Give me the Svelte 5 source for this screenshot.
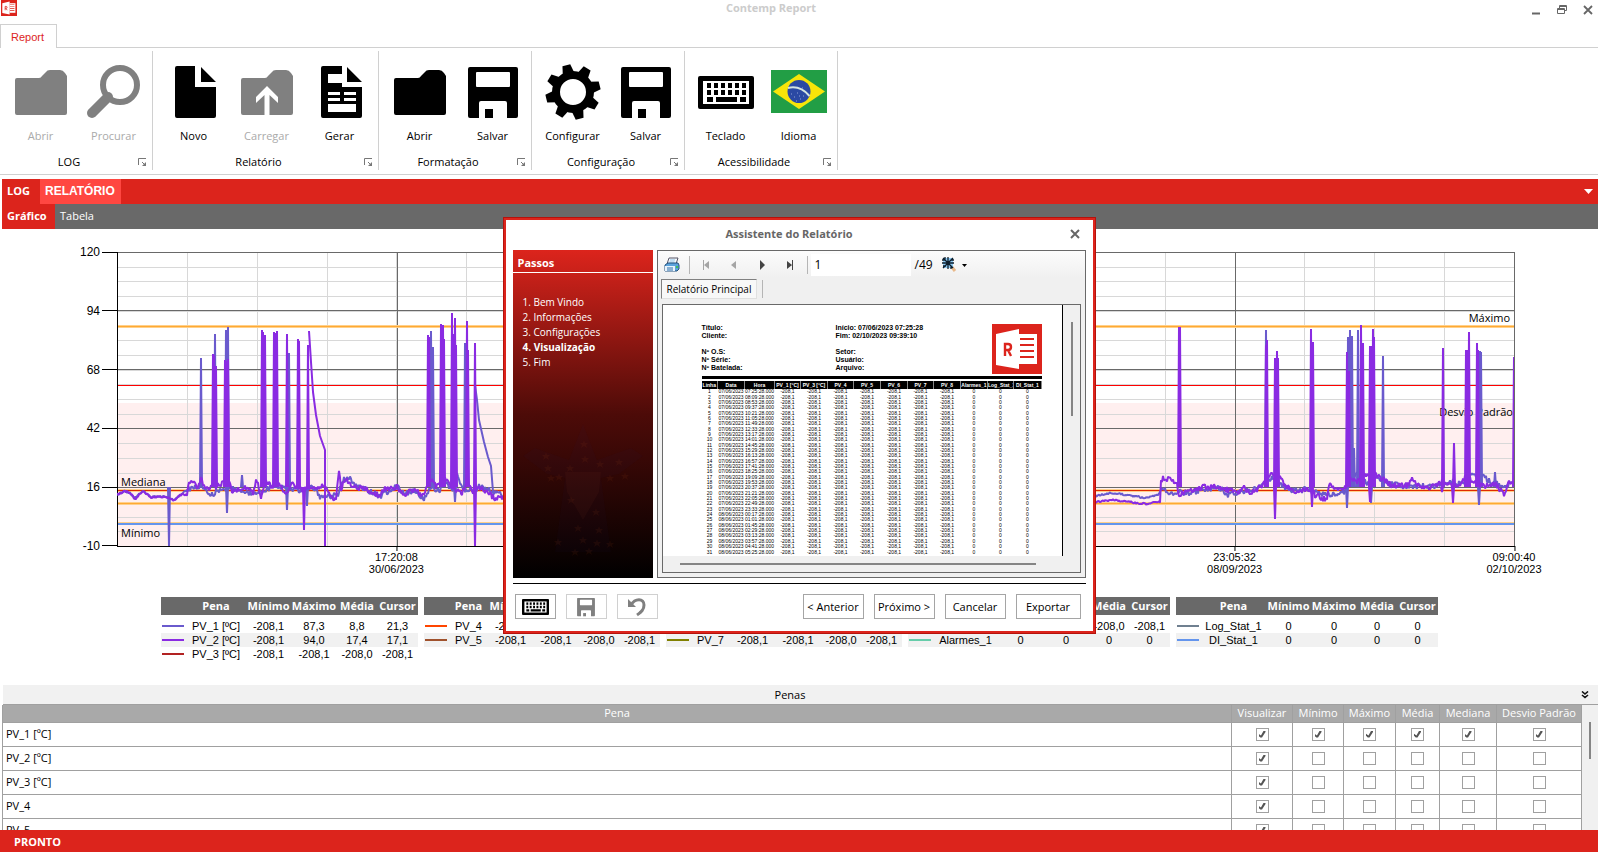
<script>
  const groups = [
    { name: 'LOG', items: [
      { label: 'Abrir', icon: 'folder', disabled: true },
      { label: 'Procurar', icon: 'search', disabled: true },
    ] },
    { name: 'Relatório', items: [
      { label: 'Novo', icon: 'file' },
      { label: 'Carregar', icon: 'upload', disabled: true },
      { label: 'Gerar', icon: 'report' },
    ] },
    { name: 'Formatação', items: [
      { label: 'Abrir', icon: 'folder' },
      { label: 'Salvar', icon: 'save' },
    ] },
    { name: 'Configuração', items: [
      { label: 'Configurar', icon: 'gear' },
      { label: 'Salvar', icon: 'save' },
    ] },
    { name: 'Acessibilidade', items: [
      { label: 'Teclado', icon: 'keyboard' },
      { label: 'Idioma', icon: 'flag' },
    ] },
  ];

  // plot area, in viewBox units
  const plot = { x: 117, y: 252, w: 1397, h: 294 };
  const yTicks = [120, 94, 68, 42, 16, -10];
  const xTicks = [
    { at: 20, time: '17:20:08', date: '30/06/2023' },
    { at: 80, time: '23:05:32', date: '08/09/2023' },
    { at: 100, time: '09:00:40', date: '02/10/2023' },
  ];
  const minorY = Array.from({ length: 20 }, (_, i) => Math.round(plot.y + (i * plot.h) / 20));
  const minorX = Array.from({ length: 20 }, (_, i) => Math.round(plot.x + (i * plot.w) / 20));

  const base1 = [
    [117, 495], [124, 491], [130, 493], [134, 498], [143, 491], [150, 497], [168, 497], [174, 501], [180, 495],
    [188, 490], [195, 486], [203, 486], [210, 495], [220, 490], [230, 488], [240, 492], [252, 493], [262, 492],
    [275, 485], [284, 488], [300, 491], [309, 487], [317, 490], [320, 498], [330, 496], [338, 495], [343, 480],
    [349, 478], [356, 486], [366, 489], [375, 493], [380, 497], [388, 491], [397, 487], [405, 494], [415, 490],
    [424, 500], [430, 487], [440, 490], [446, 481], [452, 492], [457, 475], [465, 490], [475, 490], [480, 486],
    [504, 496], [1096, 496], [1110, 493], [1130, 495], [1145, 498], [1158, 495], [1163, 487], [1168, 495],
    [1180, 492], [1190, 493], [1205, 489], [1220, 488], [1228, 495], [1240, 492], [1255, 489], [1264, 482],
    [1275, 477], [1283, 486], [1295, 491], [1310, 489], [1320, 494], [1335, 494], [1345, 491], [1350, 478],
    [1358, 475], [1367, 483], [1376, 476], [1390, 484], [1405, 486], [1420, 486], [1440, 485], [1452, 481],
    [1460, 484], [1470, 476], [1482, 474], [1490, 482], [1505, 486], [1513, 481],
  ];
  const base2 = [
    [117, 495], [124, 491], [130, 493], [135, 499], [143, 491], [150, 497], [168, 497], [174, 501], [180, 495],
    [187, 494], [189, 482], [198, 486], [201, 478], [205, 489], [216, 487], [228, 481], [232, 491], [244, 487],
    [253, 493], [257, 479], [261, 499], [265, 480], [272, 487], [278, 482], [284, 494], [292, 484], [303, 491],
    [309, 486], [325, 487], [332, 500], [336, 500], [339, 470], [341, 488], [346, 480], [354, 486], [366, 490],
    [378, 495], [385, 489], [397, 487], [404, 495], [413, 490], [424, 495], [430, 478], [436, 486], [447, 478],
    [452, 487], [462, 493], [468, 480], [473, 496], [477, 487], [488, 492], [495, 499], [504, 498], [1096, 502],
    [1115, 500], [1130, 502], [1145, 504], [1160, 502], [1161, 480], [1165, 478], [1172, 481], [1177, 483],
    [1179, 495], [1188, 491], [1200, 488], [1215, 486], [1228, 490], [1238, 494], [1243, 487], [1250, 492],
    [1262, 487], [1268, 476], [1278, 474], [1285, 486], [1296, 493], [1310, 489], [1316, 496], [1327, 500],
    [1329, 484], [1335, 488], [1346, 488], [1350, 475], [1356, 482], [1363, 477], [1371, 472], [1383, 479],
    [1392, 486], [1408, 485], [1412, 477], [1418, 486], [1430, 487], [1442, 482], [1448, 484], [1456, 487],
    [1466, 477], [1476, 483], [1484, 486], [1495, 484], [1504, 494], [1508, 484], [1514, 480],
  ];

  // [x, y of the far end]
  const spikes1 = [
    [169, 546], [201, 358], [215, 334], [226, 330], [227, 513], [228, 327], [242, 475], [287, 510], [289, 353],
    [307, 506], [431, 331], [433, 347], [453, 334], [455, 502], [465, 343], [466, 345], [1266, 330], [1347, 508],
    [1348, 337], [1350, 330], [1352, 336], [1354, 448], [1358, 330], [1371, 503], [1383, 356], [1479, 505],
    [1480, 351], [1481, 352], [1495, 472],
  ];
  const spikes2 = [
    [213, 354], [214, 355], [216, 366], [225, 360], [226, 361], [228, 359], [262, 330], [263, 332], [265, 335],
    [274, 332], [275, 333], [277, 331], [287, 334], [298, 339], [299, 341], [304, 530], [308, 345], [428, 335],
    [429, 337], [441, 324], [443, 325], [444, 339], [452, 313], [453, 334], [455, 318], [456, 345], [467, 321],
    [468, 350], [475, 343], [475, 546], [1179, 327], [1180, 327], [1266, 345], [1267, 340], [1275, 358],
    [1275, 519], [1277, 351], [1278, 358], [1311, 329], [1312, 507], [1313, 342], [1347, 352], [1349, 371],
    [1361, 325], [1362, 345], [1363, 343], [1370, 346], [1370, 502], [1371, 346], [1373, 329], [1374, 337],
    [1442, 492], [1443, 348], [1453, 503], [1454, 443], [1466, 350], [1467, 350], [1469, 332], [1477, 343],
    [1478, 350], [1514, 357],
  ];
  const decay1 = '475,385 477,400 479,420 484,442 488,457 491,466 493,492';
  const decay2 = '309,331 311,362 313,392 316,415 320,436 325,450 325,546';

  function walk(base, seed) {
    let s = seed;
    const out = [];
    for (let i = 0; i < base.length - 1; i++) {
      const [x0, y0] = base[i];
      const [x1, y1] = base[i + 1];
      const amp = x0 < 185 || (x0 > 1090 && x0 < 1160) ? 2 : 6;
      for (let x = x0; x < x1; x++) {
        s = (s * 1103515245 + 12345) % 2147483648;
        const noise = (s / 2147483648 - 0.5) * amp;
        out.push(`${x},${(y0 + ((y1 - y0) * (x - x0)) / (x1 - x0) + noise).toFixed(1)}`);
      }
    }
    return out.join(' ');
  }

  const spikePath = (list) => list.map(([x, y]) => `M${x - 1} 487L${x} ${y}L${x + 1} 487`).join('');

  const n = '-208,1';
  const legends = [
    { pena: 60, rows: [
      ['#6a5acd', 'PV_1 [ºC]', n, '87,3', '8,8', '21,3'],
      ['#8a2be2', 'PV_2 [ºC]', n, '94,0', '17,4', '17,1'],
      ['#b22222', 'PV_3 [ºC]', n, n, '-208,0', n],
    ] },
    { pena: 39, rows: [
      ['#ff4500', 'PV_4', n, n, '-208,0', n],
      ['#a0522d', 'PV_5', n, n, '-208,0', n],
    ] },
    { pena: 39, rows: [
      ['#2e8b57', 'PV_6', n, n, '-208,0', n],
      ['#808000', 'PV_7', n, n, '-208,0', n],
    ] },
    { pena: 65, rows: [
      ['#4682b4', 'PV_8', n, n, '-208,0', n],
      ['#66cdaa', 'Alarmes_1', '0', '0', '0', '0'],
    ] },
    { pena: 65, rows: [
      ['#708090', 'Log_Stat_1', '0', '0', '0', '0'],
      ['#6495ed', 'DI_Stat_1', '0', '0', '0', '0'],
    ] },
  ];

  const penCols = ['Visualizar', 'Mínimo', 'Máximo', 'Média', 'Mediana', 'Desvio Padrão'];
  let pens = $state(
    ['PV_1 [ºC]', 'PV_2 [ºC]', 'PV_3 [ºC]', 'PV_4', 'PV_5'].map((name, i) => ({
      name,
      on: penCols.map((_, c) => i === 0 || c === 0),
    }))
  );

  const steps = ['Bem Vindo', 'Informações', 'Configurações', 'Visualização', 'Fim'];
  const stars = [[71, 32], [72, 47], [35, 56], [33, 44], [46, 65], [57, 56], [87, 52], [106, 50], [112, 64], [38, 66], [97, 66], [83, 100], [65, 116], [86, 118], [70, 128], [45, 130], [84, 131], [62, 140], [76, 139], [97, 132], [58, 88]];

  const reportCols = ['Linha', 'Data', 'Hora', 'PV_1 [°C]', 'PV_3 [°C]', 'PV_4', 'PV_5', 'PV_6', 'PV_7', 'PV_8', 'Alarmes_1', 'Log_Stat_1', 'DI_Stat_1'];
  const reportWidths = [16, 27, 30, 26, 27, 26, 27, 27, 26, 27, 27, 26, 28];
  const two = (v) => String(v).padStart(2, '0');
  const reportRows = Array.from({ length: 31 }, (_, i) => {
    const min = 7 * 60 + 25 + i * 44;
    const day = min >= 1440 ? 8 : 7;
    const time = `${two(Math.floor(min / 60) % 24)}:${two(min % 60)}:28.000`;
    return [i + 1, `0${day}/06/2023`, time, n, n, n, n, n, n, n, 0, 0, 0];
  });

  let page = $state('1');
</script>

{#snippet keyboard()}
  <rect x="0" y="12" width="56" height="33" rx="2" />
  <rect x="5" y="17" width="46" height="23" fill="#fff" />
  {#each [19, 26] as ky}
    {#each [0, 1, 2, 3, 4, 5] as k}
      <rect x={9 + k * 7} y={ky} width="4" height="5" />
    {/each}
  {/each}
  <path d="M9 33h6v5H9zM18 33h21v5H18zM42 33h6v5h-6z" />
{/snippet}

{#snippet save()}
  <path fill-rule="evenodd" d="M5 3H51Q53 3 53 5V52Q53 54 51 54H42V39Q42 37 40 37H16Q14 37 14 39V54H5Q3 54 3 52V5Q3 3 5 3ZM12 8Q11 8 11 9V22Q11 23 12 23H44Q45 23 45 22V9Q45 8 44 8Z" />
  <rect x="20" y="45" width="8" height="9" />
{/snippet}

{#snippet logo()}
  <rect width="50" height="50" fill="#dc241c" />
  <path d="M27 10H45V40H27z" fill="#fff" />
  <path d="M28 14h14v2H28zM28 20h14v2H28zM28 26h14v2H28zM28 32h14v2H28z" fill="#dc241c" />
  <path d="M4 10L27 5V45L4 41z" fill="#fff" />
  <path d="M13 32V20h3q3 0 3 3t-3 3h-3m3 0l3 6" fill="none" stroke="#dc241c" stroke-width="2.4" />
{/snippet}

{#snippet icon(name)}
  <svg class="icon" viewBox="0 0 56 56" aria-hidden="true">
    {#if name === 'folder' || name === 'upload'}
      <path d="M2 16Q2 14 4 14H26Q28 14 29 12L33 8Q34 6 37 6H47Q50 6 52 9L54 12V49Q54 51 52 51H4Q2 51 2 49Z" />
      {#if name === 'upload'}
        <path d="M28 22L39 33V39L30.500 31V51H25.500V31L17 39V33Z" fill="#fff" />
      {/if}
    {:else if name === 'search'}
      <circle cx="34" cy="21" r="17" fill="none" stroke="currentColor" stroke-width="6" />
      <path d="M22 33L6 49" stroke="currentColor" stroke-width="10" stroke-linecap="round" />
    {:else if name === 'file'}
      <path d="M11 2H29V23H50V52Q50 54 48 54H11Q9 54 9 52V4Q9 2 11 2ZM35 3L50 18H35Z" />
    {:else if name === 'report'}
      <path d="M11 2H30V23H50V52Q50 54 48 54H11Q9 54 9 52V4Q9 2 11 2ZM35 3L50 18H35Z" />
      <path d="M16 10H30V19H16ZM16 28H28V31H16ZM32 28H44V31H32ZM16 34H28V37H16ZM32 34H44V37H32ZM16 40H44V48H16Z" fill="#fff" />
    {:else if name === 'save'}
      {@render save()}
    {:else if name === 'gear'}
      <circle cx="28" cy="28" r="17" fill="none" stroke="currentColor" stroke-width="8" />
      {#each [0, 1, 2, 3, 4, 5, 6, 7] as t}
        <path d="M22 10L24 0.500H32L34 10Z" transform="rotate({t * 45 - 14} 28 28)" />
      {/each}
    {:else if name === 'keyboard'}
      {@render keyboard()}
    {:else}
      <rect y="6" width="56" height="43" fill="#229e45" />
      <path d="M2 27.500L28 10L54 27.500L28 45Z" fill="#f8e509" />
      <circle cx="28" cy="27.500" r="11.500" fill="#2b49a3" />
      <path d="M17 24Q29 21 38.500 32" fill="none" stroke="#d5e4e0" stroke-width="2" />
      <path d="M20 30h1M23 33h1M26 29h1M29 35h1M32 32h1M25 37h1M31 24h1M28 32h1" stroke="#8fa3d8" />
    {/if}
  </svg>
{/snippet}

<div class="app">
  <header class="titlebar">
    <svg class="app-logo" viewBox="0 0 50 50" aria-hidden="true">{@render logo()}</svg>
    <span class="title">Contemp Report</span>
    <div class="win">
      <button aria-label="Minimizar"><svg viewBox="0 0 12 12"><path d="M2 9.500H10" stroke-width="2" /></svg></button>
      <button aria-label="Restaurar"><svg viewBox="0 0 12 12"><path d="M1.500 4.500h7v5h-7zM3.500 4V1.500h7v5H9M3.500 2.500h7M1.500 5.500h7" /></svg></button>
      <button aria-label="Fechar"><svg viewBox="0 0 12 12"><path d="M2 2L10 10M10 2L2 10" stroke-width="1.800" /></svg></button>
    </div>
  </header>

  <nav class="ribbon-tabs"><button>Report</button></nav>

  <div class="ribbon">
    {#each groups as g}
      <section class="group">
        <div class="tools">
          {#each g.items as item}
            <button class="tool" disabled={item.disabled}>
              {@render icon(item.icon)}
              <span>{item.label}</span>
            </button>
          {/each}
        </div>
        <div class="group-name">
          <span>{g.name}</span>
          <svg viewBox="0 0 9 9" aria-hidden="true"><path d="M.5 7V.5H8M4 4l3 3" fill="none" stroke="#777" /><path d="M8 4v4H4z" fill="#777" /></svg>
        </div>
      </section>
    {/each}
  </div>

  <nav class="main-tabs">
    <button>LOG</button>
    <button class="active">RELATÓRIO</button>
    <svg viewBox="0 0 9 5" aria-hidden="true"><path d="M0 0H9L4.500 5Z" fill="#fff" /></svg>
  </nav>
  <nav class="sub-tabs">
    <button class="active">Gráfico</button>
    <button>Tabela</button>
  </nav>

  <section class="chart">
    <div class="y-axis">
      {#each yTicks as t}<span>{t}</span>{/each}
    </div>
    <div class="plot">
      <svg viewBox="117 252 1397 294" preserveAspectRatio="none" shape-rendering="crispEdges" aria-hidden="true">
        <rect x="117" y="403" width="1397" height="143" fill="#ffefef" />
        <g stroke="#d8d8d8">
          {#each minorY as y}<line x1="117" x2="1514" y1={y + 0.5} y2={y + 0.5} />{/each}
          {#each minorX as x}<line x1={x + 0.5} x2={x + 0.5} y1="252" y2="546" />{/each}
        </g>
        <g stroke="#696969">
          {#each [252, 310, 369, 428, 487] as y}<line x1="117" x2="1514" y1={y + 0.5} y2={y + 0.5} />{/each}
          {#each [397, 676, 955, 1235, 1514] as x}<line x1={x + 0.5} x2={x + 0.5} y1="252" y2="546" />{/each}
        </g>
        <g fill="#ffd08a">
          <rect x="117" y="325" width="1397" height="3" />
          <rect x="117" y="502" width="1397" height="3" />
          <rect x="117" y="522" width="1397" height="2" />
          <rect x="117" y="489" width="1397" height="3" />
        </g>
        <g fill="#ffa933">
          <rect x="117" y="326" width="1397" height="1" />
          <rect x="117" y="503" width="1397" height="1" />
        </g>
        <rect x="117" y="385" width="1397" height="1" fill="#f00" />
        <rect x="117" y="490" width="1397" height="1" fill="#e02a00" />
        <rect x="117" y="523" width="1397" height="2" fill="#6495ed" />
        <path d="M117.500 252V546.500H1515" fill="none" stroke="#000" />
      </svg>
      <span class="note median">Mediana</span>
      <span class="note min">Mínimo</span>
      <span class="note max">Máximo</span>
      <span class="note dev">Desvio Padrão</span>
      <svg class="series" viewBox="117 252 1397 294" preserveAspectRatio="none" role="img" aria-label="PV_1, PV_2">
        <g class="pv1">
          <polyline points={walk(base1, 11)} />
          <path d={spikePath(spikes1)} />
          <polyline points={decay1} />
        </g>
        <g class="pv2">
          <polyline points={walk(base2, 47)} />
          <path d={spikePath(spikes2)} />
          <polyline points={decay2} />
        </g>
      </svg>
      {#each xTicks as t}
        <div class="x-label" style:left="{t.at}%">{t.time}<br />{t.date}</div>
      {/each}
    </div>
  </section>

  <section class="legends">
    {#each legends as l}
      <table class="legend">
        <colgroup>
          <col class="c-line" /><col style:width="{l.pena}px" /><col class="c-min" /><col class="c-max" /><col class="c-med" /><col class="c-cur" />
        </colgroup>
        <thead>
          <tr><th></th><th>Pena</th><th>Mínimo</th><th>Máximo</th><th>Média</th><th>Cursor</th></tr>
        </thead>
        <tbody>
          {#each l.rows as [color, ...cells]}
            <tr>
              <td><i style:background={color}></i></td>
              {#each cells as c}<td>{c}</td>{/each}
            </tr>
          {/each}
        </tbody>
      </table>
    {/each}
  </section>

  <section class="pens">
    <div class="pens-title">
      <span>Penas</span>
      <svg viewBox="0 0 8 8" aria-hidden="true"><path d="M1 .5l3 2.500l3-2.500M1 4l3 2.500l3-2.500" fill="none" stroke="#111" stroke-width="1.600" /></svg>
    </div>
    <div class="pens-body">
      <table class="pen-table">
        <colgroup>
          <col /><col class="w61" /><col class="w51" /><col class="w52" /><col class="w44" /><col class="w57" /><col class="w85" />
        </colgroup>
        <thead>
          <tr><th>Pena</th>{#each penCols as c}<th>{c}</th>{/each}</tr>
        </thead>
        <tbody>
          {#each pens as p}
            <tr>
              <td>{p.name}</td>
              {#each penCols as c, i}
                <td><input type="checkbox" aria-label="{p.name} {c}" bind:checked={p.on[i]} /></td>
              {/each}
            </tr>
          {/each}
        </tbody>
      </table>
      <div class="v-track"><i></i></div>
    </div>
  </section>

  <footer>PRONTO</footer>
</div>

<div class="overlay">
  <div class="dialog" role="dialog" aria-label="Assistente do Relatório">
    <div class="dialog-head">
      <h2>Assistente do Relatório</h2>
      <button aria-label="Fechar"><svg viewBox="0 0 10 10"><path d="M1 1L9 9M9 1L1 9" stroke="#666" stroke-width="2" /></svg></button>
    </div>

    <div class="dialog-body">
      <aside>
        <h3>Passos</h3>
        <ol>
          {#each steps as s, i}
            <li class:current={i === 3}>{i + 1}. {s}</li>
          {/each}
        </ol>
        <svg class="wizard" viewBox="0 0 140 150" aria-hidden="true">
          <path d="M70 12L84 48L118 36L130 44L106 62L88 66L98 140H42L52 66L34 62L10 44L22 36L56 48Z" fill="#222266" opacity=".06" />
          <path d="M52 60H88L86 80L70 108L54 80Z" fill="#c06040" opacity=".05" />
          {#each stars as [x, y]}
            <path transform="translate({x} {y})" d="M0-4L1-1H4L2 1L3 4L0 2L-3 4L-2 1L-4-1H-1Z" fill="#a04020" opacity=".1" />
          {/each}
        </svg>
      </aside>

      <div class="viewer">
        <div class="viewer-bar">
          <button aria-label="Imprimir">
            <svg class="printer" viewBox="0 0 16 15">
              <path d="M5 1H14L12 7H3Z" fill="#f4f8fc" stroke="#556" />
              <path d="M6 3h5M5.500 5h5" stroke="#8fc3e8" />
              <path d="M1 8L4 6H14L15 8V12L13 14H1Z" fill="#5ba3dc" stroke="#24527e" />
              <path d="M1 9H11V14H1Z" fill="#e8f3fc" /><path d="M3 11h6M3 13h6" stroke="#2b6ca8" /><circle cx="13" cy="10" r="1" fill="#3c3" />
            </svg>
          </button>
          <i class="sep"></i>
          <button aria-label="Primeira"><svg viewBox="0 0 8 10"><path d="M1 0V10H2V0ZM7 1V9L2 5Z" fill="#a5a5a5" /></svg></button>
          <button aria-label="Voltar"><svg viewBox="0 0 8 10"><path d="M6 1V9L1 5Z" fill="#a5a5a5" /></svg></button>
          <button aria-label="Avançar"><svg viewBox="0 0 8 10"><path d="M2 0V10L7 5Z" fill="#444" /></svg></button>
          <button aria-label="Última"><svg viewBox="0 0 8 10"><path d="M7 0V10H6V0ZM1 1V9L6 5Z" fill="#444" /></svg></button>
          <i class="sep"></i>
          <input class="page-no" aria-label="Página" bind:value={page} />
          <span class="pages">/49</span>
          <button class="zoom" aria-label="Zoom">
            <svg viewBox="0 0 26 16">
              <path d="M9 9L13 14" stroke="#e9b98a" stroke-width="3" />
              <rect x="1" y="1" width="10" height="10" fill="#8cc8f0" />
              <path d="M6 0V12M0 6H12M1 1L11 11M11 1L1 11M3 0V3M9 9V12M0 3H3M9 3H12M1 9H4" stroke="#0d1e2c" stroke-width="1.300" />
              <path d="M20 7H25L22.500 10Z" fill="#000" />
            </svg>
          </button>
        </div>
        <div class="viewer-tabs"><button>Relatório Principal</button><i class="sep"></i></div>

        <div class="canvas">
          <div class="sheet">
            <div class="sheet-head">
              <div>Título:<br />Cliente:<br /><br />Nº O.S:<br />Nº Série:<br />Nº Batelada:</div>
              <div>Início: 07/06/2023 07:25:28<br />Fim: 02/10/2023 09:39:10<br /><br />Setor:<br />Usuário:<br />Arquivo:</div>
              <svg viewBox="0 0 50 50" aria-hidden="true">{@render logo()}</svg>
            </div>
            <table class="report">
              <colgroup>{#each reportWidths as w}<col style:width="{w}px" />{/each}</colgroup>
              <thead><tr>{#each reportCols as c}<th>{c}</th>{/each}</tr></thead>
              <tbody>
                {#each reportRows as r}
                  <tr>{#each r as c}<td>{c}</td>{/each}</tr>
                {/each}
              </tbody>
            </table>
          </div>
          <div class="canvas-v"><i></i></div>
          <div class="canvas-h"><i></i></div>
        </div>
      </div>
    </div>

    <div class="dialog-foot">
      <button aria-label="Teclado"><svg class="kb" viewBox="0 10 56 37">{@render keyboard()}</svg></button>
      <button class="off" disabled aria-label="Salvar"><svg viewBox="0 0 56 56">{@render save()}</svg></button>
      <button class="off" disabled aria-label="Desfazer"><svg viewBox="0 0 20 20"><path d="M1 2V10H9Z" /><path d="M4 8C8 1 17 1 17 8C17 13 14 15 10 18" fill="none" stroke="currentColor" stroke-width="3" /></svg></button>
      <span class="grow"></span>
      <button class="text">&lt; Anterior</button>
      <button class="text">Próximo &gt;</button>
      <button class="text">Cancelar</button>
      <button class="text wide">Exportar</button>
    </div>
  </div>
</div>

<style>
  :global(body) {
    background: #fff;
    overflow: hidden;
  }

  .app,
  .overlay {
    font: 11px/16px 'Open Sans', 'Noto Sans', sans-serif;
    color: #000;
  }

  .app *,
  .overlay * {
    box-sizing: border-box;
  }

  button,
  input {
    font: inherit;
    color: inherit;
    background: none;
    border: 0;
    padding: 0;
    margin: 0;
  }

  svg {
    display: block;
    fill: currentColor;
  }

  table {
    border-collapse: collapse;
    table-layout: fixed;
  }

  .app {
    height: 100vh;
    display: flex;
    flex-direction: column;
  }

  .titlebar {
    display: grid;
    grid-template-columns: 72px 1fr 128px;
    height: 24px;
    flex: none;
  }
  .app-logo {
    width: 16px;
    height: 16px;
    margin-left: 1px;
  }
  .title {
    text-align: center;
    font-weight: 700;
    color: #ccc;
  }
  .win {
    display: flex;
    align-items: flex-start;
    justify-content: flex-end;
    gap: 14px;
    padding: 4px 4px 0 0;
  }
  .win svg {
    width: 12px;
    height: 12px;
    fill: none;
    stroke: #666;
  }

  .ribbon-tabs {
    height: 24px;
    flex: none;
    border-bottom: 1px solid #d0d0d0;
  }
  .ribbon-tabs button {
    width: 57px;
    height: 24px;
    padding-right: 2px;
    background: #fff;
    border: 1px solid #d0d0d0;
    border-bottom: 0;
    color: #dc241c;
    font-family: 'Liberation Sans', sans-serif;
    font-size: 11px;
  }

  .ribbon {
    display: flex;
    height: 127px;
    flex: none;
    padding: 3px 0 4px;
    border-bottom: 1px solid #d0d0d0;
  }
  .group {
    display: flex;
    flex-direction: column;
    justify-content: space-between;
    padding: 0 2px 0 4px;
    border-right: 1px solid #d0d0d0;
  }
  .tools {
    display: flex;
  }
  .tool {
    width: 73px;
    padding-top: 13px;
    display: flex;
    flex-direction: column;
    align-items: center;
    gap: 8px;
  }
  .tool:disabled {
    color: #808080;
  }
  .tool:disabled span {
    color: #aaa;
  }
  .icon {
    width: 56px;
    height: 56px;
  }
  .group-name {
    display: flex;
    align-items: center;
    text-align: center;
  }
  .group-name span {
    flex: 1;
    padding-right: 4px;
  }
  .group-name svg {
    width: 9px;
    height: 9px;
    margin-right: 3px;
  }

  .main-tabs,
  .sub-tabs {
    display: flex;
    height: 25px;
    flex: none;
    margin-left: 2px;
    color: #fff;
  }
  .main-tabs {
    margin-top: 4px;
    background: #dc241c;
    font-weight: 700;
    align-items: center;
  }
  .main-tabs button,
  .sub-tabs button {
    height: 25px;
    padding: 0 5px 2px;
    text-align: left;
  }
  .main-tabs button {
    width: 38px;
  }
  .main-tabs .active {
    width: 81px;
    background: #ff4741;
    font-size: 12px;
    font-family: 'Liberation Sans', sans-serif;
  }
  .main-tabs svg {
    width: 9px;
    height: 5px;
    margin: 0 5px 0 auto;
  }
  .sub-tabs {
    background: #696969;
  }
  .sub-tabs button {
    width: 53px;
  }
  .sub-tabs .active {
    background: #dc241c;
    font-weight: 700;
  }

  .chart {
    display: grid;
    grid-template-columns: 117px 1fr 84px;
    padding: 23px 0 51px;
    flex: none;
    font-family: 'Liberation Sans', sans-serif;
  }
  .y-axis {
    display: flex;
    flex-direction: column;
    justify-content: space-between;
    height: 310px;
    margin: -8px 0;
    text-align: right;
    font-size: 12px;
  }
  .y-axis span {
    display: flex;
    align-items: center;
    justify-content: flex-end;
    gap: 2px;
  }
  .y-axis span::after {
    content: '';
    width: 15px;
    height: 1px;
    background: #000;
  }
  .plot {
    position: relative;
    height: 294px;
  }
  .plot > svg {
    position: absolute;
    inset: 0;
    width: 100%;
    height: 100%;
    overflow: visible;
  }
  .plot > .series {
    fill: none;
    stroke-width: 2;
    stroke-linejoin: bevel;
    overflow: hidden;
  }
  .pv1 { stroke: #6a5acd; }
  .pv2 { stroke: #8a2be2; }
  .note {
    position: absolute;
    font-family: 'Open Sans', 'Noto Sans', sans-serif;
  }
  .median { left: 4px; top: 222px; }
  .min { left: 4px; top: 273px; }
  .max { right: 4px; top: 58px; }
  .dev { right: 1px; top: 152px; }
  .x-label {
    position: absolute;
    top: 100%;
    transform: translateX(-50%);
    padding-top: 5px;
    font-size: 11px;
    line-height: 12px;
    text-align: center;
    white-space: nowrap;
  }
  .x-label::before {
    content: '';
    position: absolute;
    left: 50%;
    top: 0;
    width: 1px;
    height: 5px;
    background: #000;
  }

  .legends {
    display: flex;
    justify-content: center;
    align-items: flex-start;
    gap: 6px;
    height: 88px;
    flex: none;
    padding-left: 1px;
  }
  .legend {
    width: 1px;
    font-size: 11px;
    line-height: 14px;
    text-align: center;
    font-family: 'Liberation Sans', sans-serif;
    white-space: nowrap;
  }
  .legend th,
  .legend td {
    padding: 0;
  }
  .legend th {
    height: 18px;
    background: #696969;
    color: #fff;
    font: 700 11px/16px 'Open Sans', 'Noto Sans', sans-serif;
  }
  .legend tbody::before {
    content: '';
    display: block;
    height: 4px;
  }
  .legend tbody tr:nth-child(2) {
    background: #f1f1f1;
  }
  .legend i {
    display: block;
    width: 22px;
    height: 2px;
    margin-left: 1px;
  }
  .c-line { width: 25px; }
  .c-min { width: 45px; }
  .c-max { width: 46px; }
  .c-med { width: 40px; }
  .c-cur { width: 41px; }

  .pens {
    flex: 1;
    min-height: 0;
    display: flex;
    flex-direction: column;
    overflow: hidden;
  }
  .pens-title {
    display: flex;
    align-items: center;
    height: 20px;
    flex: none;
    margin-left: 3px;
    padding-right: 9px;
    background: #f1f1f1;
    border-bottom: 1px solid #a0a0a0;
  }
  .pens-title span {
    flex: 1;
    text-align: center;
    padding-right: 4px;
  }
  .pens-title svg {
    width: 8px;
    height: 8px;
  }
  .pens-body {
    display: flex;
    min-height: 0;
    overflow: hidden;
    margin-left: 2px;
  }
  .pen-table {
    flex: 1;
    width: 100%;
    align-self: flex-start;
  }
  .pen-table th,
  .pen-table td {
    border: 1px solid #a0a0a0;
    padding: 0;
    text-align: center;
  }
  .pen-table th {
    height: 17px;
    background: #a9a9a9;
    color: #fff;
    font-weight: 400;
    border-top: 0;
  }
  .pen-table td {
    height: 24px;
  }
  .pen-table td:first-child {
    text-align: left;
    padding-left: 3px;
  }
  .w61 { width: 61px; }
  .w51 { width: 51px; }
  .w52 { width: 52px; }
  .w44 { width: 44px; }
  .w57 { width: 57px; }
  .w85 { width: 85px; }
  .pen-table input {
    appearance: none;
    display: block;
    width: 13px;
    height: 13px;
    margin: 0 auto;
    border: 1px solid #a0a0a0;
    background: #fff;
  }
  .pen-table input:checked::before {
    content: '';
    display: block;
    width: 7px;
    height: 7px;
    margin: 2px;
    background: #555;
    clip-path: polygon(75% 0, 100% 0, 100% 20%, 50% 100%, 25% 100%, 0 75%, 0 45%, 35% 70%);
  }
  .v-track {
    width: 16px;
    background: #f0f0f0;
  }
  .v-track i {
    display: block;
    width: 2px;
    height: 37px;
    margin: 17px 0 0 7px;
    background: #858585;
  }

  footer {
    height: 22px;
    flex: none;
    background: #dc241c;
    color: #fff;
    font-weight: 700;
    line-height: 23px;
    padding-left: 14px;
  }

  .overlay {
    position: fixed;
    inset: 0;
    display: grid;
    place-items: center;
    padding-bottom: 1px;
  }
  .dialog {
    width: 593px;
    background: #fff;
    border: 1px solid #b5120c;
    box-shadow: inset 0 0 0 2px #dc241c;
    padding: 3px 9px 14px;
  }
  .dialog-head {
    display: flex;
    align-items: center;
    height: 29px;
    padding: 0 6px 3px 0;
  }
  .dialog-head h2 {
    flex: 1;
    margin: 0;
    font-size: 11px;
    text-align: center;
    padding-right: 4px;
    color: #666;
  }
  .dialog-head svg {
    width: 10px;
    height: 10px;
  }
  .dialog-body {
    display: flex;
    gap: 4px;
    height: 328px;
  }
  aside {
    position: relative;
    width: 140px;
    color: #fff;
    background: linear-gradient(#dc241c, #4d0b08 50%, #000);
  }
  aside h3 {
    margin: 0;
    padding: 5px 5px 1px;
    font-size: 11px;
    border-bottom: 1px solid #fff;
  }
  aside ol {
    list-style: none;
    margin: 22px 0 0;
    padding: 0 0 0 10px;
    font-size: 10px;
    line-height: 15px;
  }
  aside .current {
    font-weight: 700;
  }
  .wizard {
    position: absolute;
    left: 0;
    bottom: 16px;
    width: 140px;
  }

  .viewer {
    flex: 1;
    min-width: 0;
    display: flex;
    flex-direction: column;
    border: 1px solid #696969;
    background: #f0f0f0;
    padding: 0 4px 4px;
  }
  .viewer-bar {
    display: flex;
    align-items: center;
    height: 27px;
    margin-left: -4px;
    margin-right: -4px;
    padding-left: 6px;
    background: linear-gradient(#fcfcfc, #f0f0f0);
  }
  .viewer-bar button {
    width: 28px;
    display: flex;
    justify-content: center;
  }
  .viewer-bar button svg {
    width: 8px;
    height: 10px;
  }
  .viewer-bar button:first-child,
  .viewer-bar button:first-child svg {
    width: 16px;
    height: 15px;
  }
  .viewer-bar .sep {
    margin-left: 9px;
  }
  .viewer-bar .sep + button {
    margin-left: 2px;
  }
  .viewer-bar button + .sep:not(:nth-child(2)) {
    margin-left: 3px;
  }
  .sep {
    width: 1px;
    height: 18px;
    background: #b5b5b5;
  }
  .page-no {
    width: 100px;
    height: 22px;
    margin-left: 3px;
    padding: 0 4px;
    background: #fff;
  }
  .page-no,
  .pages {
    font-size: 12px;
  }
  .pages {
    margin-left: 4px;
  }
  .viewer-bar .zoom {
    margin-left: 8px;
  }
  .viewer-bar .zoom svg {
    width: 26px;
    height: 16px;
  }
  .viewer-tabs {
    display: flex;
    align-items: center;
    gap: 5px;
    height: 26px;
    padding-bottom: 4px;
    margin-left: -1px;
  }
  .viewer-tabs button {
    height: 20px;
    padding: 0 5px;
    font-size: 10px;
    background: #f8f8f8;
    border: 1px solid #e0e0e0;
    border-top-color: #808080;
    border-left-color: #808080;
  }

  .canvas {
    flex: 1;
    min-height: 0;
    display: grid;
    grid-template-columns: 400px 1fr;
    grid-template-rows: 251px 1fr;
    border: 1px solid #696969;
  }
  .sheet {
    background: #fff;
    border-right: 1px solid #000;
    padding: 19px 20px 0 39px;
    overflow: hidden;
    font-family: 'Liberation Sans', sans-serif;
  }
  .sheet-head {
    display: grid;
    grid-template-columns: 134px 1fr 50px;
    font: 700 7px/8px 'Liberation Sans', sans-serif;
    height: 55px;
    border-bottom: 3px solid #000;
  }
  .sheet-head svg {
    width: 50px;
    height: 50px;
  }
  .report {
    width: 100%;
    margin-top: 2px;
    height: 174px;
    font-size: 5px;
    line-height: 5px;
    text-align: center;
    white-space: nowrap;
  }
  .report th {
    padding: 0;
    height: 8px;
    background: #000;
    color: #fff;
    border-right: 1px solid #888;
    overflow: hidden;
  }
  .report td {
    padding: 0;
  }
  .canvas-v {
    padding: 17px 0 0 8px;
  }
  .canvas-v i {
    display: block;
    width: 2px;
    height: 94px;
    background: #858585;
  }
  .canvas-h i {
    display: block;
    height: 2px;
    margin: 7px 27px 0 17px;
    background: #858585;
  }

  .dialog-foot {
    display: flex;
    gap: 10px;
    margin-top: 5px;
    padding: 10px 5px 0 2px;
    border-top: 1px solid #000;
  }
  .dialog-foot button {
    display: grid;
    place-items: center;
    width: 41px;
    height: 25px;
    border: 1px solid #a5a5a5;
  }
  .dialog-foot .off {
    border-color: #d0d0d0;
    color: #808080;
  }
  .dialog-foot svg {
    width: 20px;
    height: 20px;
  }
  .dialog-foot .kb {
    width: 27px;
    height: 18px;
  }
  .dialog-foot .grow {
    flex: 1;
  }
  .dialog-foot .text {
    width: 61px;
  }
  .dialog-foot .wide {
    width: 65px;
  }
</style>
